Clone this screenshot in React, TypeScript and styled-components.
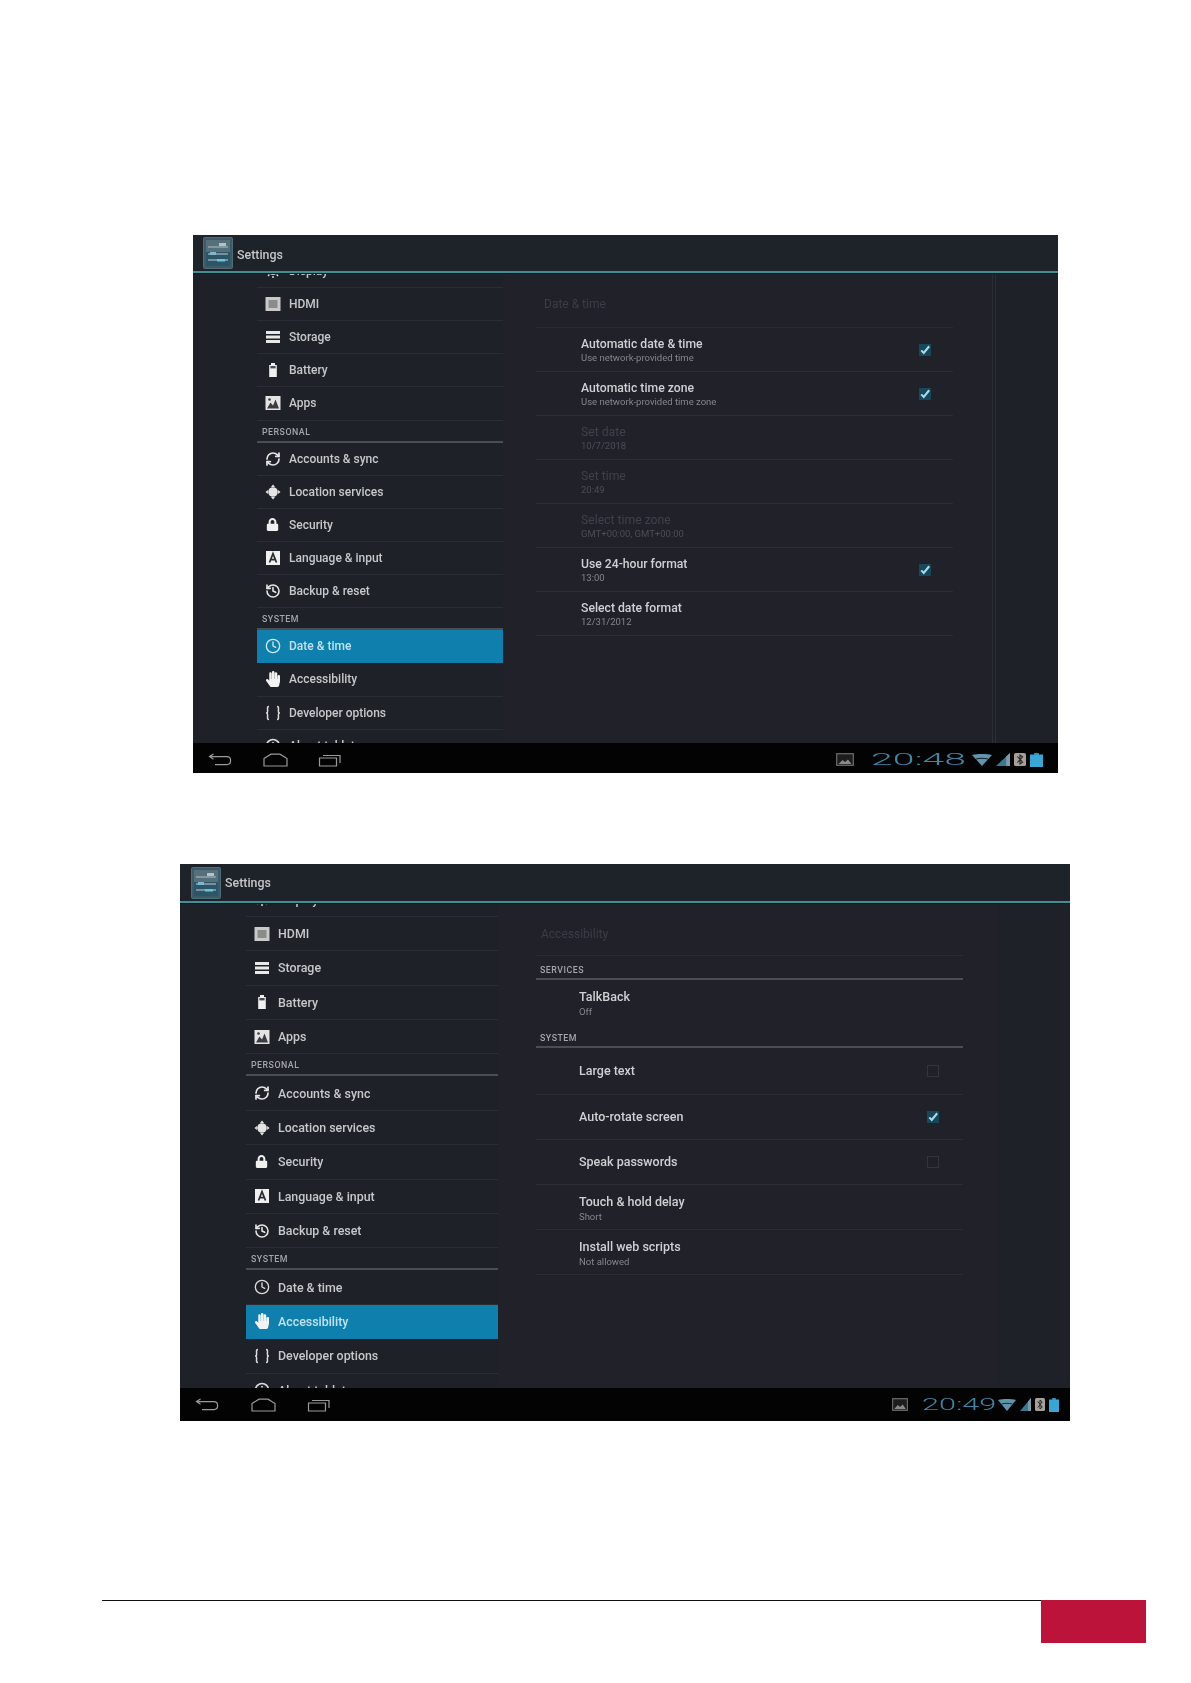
import React from "react";
import styled, { createGlobalStyle } from "styled-components";
import { Clock, History, RefreshCw } from "lucide-react";
import { FaHandPaper, FaLock } from "react-icons/fa";

const Global = createGlobalStyle`
  html, body { margin: 0; padding: 0; background: #fff; }
  body { font-family: Roboto, "Liberation Sans", sans-serif; }
`;

const Page = styled.div`
  width: 1191px;
  height: 1683px;
  overflow: hidden;
  display: flex;
  flex-direction: column;
`;

const Screen = styled.section<{ $left: number; $top: number; $w: number; $h: number }>`
  flex: none;
  margin-left: ${(p) => p.$left}px;
  margin-top: ${(p) => p.$top}px;
  width: ${(p) => p.$w}px;
  height: ${(p) => p.$h}px;
  background: #1e2128;
  display: flex;
  flex-direction: column;
  overflow: hidden;
  filter: blur(0.6px);
`;

const ActionBar = styled.header<{ $h: number; $pad: number }>`
  flex: none;
  height: ${(p) => p.$h}px;
  padding-left: ${(p) => p.$pad}px;
  box-sizing: border-box;
  display: flex;
  align-items: center;
  gap: 4px;
  background: #1e2229;
  border-bottom: 2px solid #3a9298;
  box-shadow: 0 1px 0 #11151a;
  position: relative;
  z-index: 2;
`;

const BarTitle = styled.span<{ $dy: number }>`
  margin-top: ${(p) => p.$dy}px;
  font-size: 12.4px;
  font-weight: 500;
  color: #c4c6c8;
`;

const Body = styled.div`
  flex: 1;
  min-height: 0;
  display: flex;
  overflow: hidden;
`;

const Sidebar = styled.nav<{ $gutter: number; $w: number }>`
  flex: none;
  margin-left: ${(p) => p.$gutter}px;
  width: ${(p) => p.$w}px;
  overflow: hidden;
`;

const MenuList = styled.div<{ $scroll: number }>`
  margin-top: ${(p) => p.$scroll}px;
`;

const MenuRow = styled.div<{ $h: number; $fs: number; $active?: boolean }>`
  height: ${(p) => p.$h}px;
  box-sizing: border-box;
  display: flex;
  align-items: center;
  gap: 8px;
  padding-left: 7px;
  font-size: ${(p) => p.$fs}px;
  font-weight: 500;
  color: ${(p) => (p.$active ? "#bfe3f0" : "#c6c8ca")};
  background: ${(p) => (p.$active ? "#0f7fae" : "transparent")};
  border-bottom: 1px solid ${(p) => (p.$active ? "#0f7fae" : "#2a2d34")};
`;

const MenuIcon = styled.span<{ $active?: boolean }>`
  flex: none;
  width: 17px;
  height: 17px;
  display: flex;
  align-items: center;
  justify-content: center;
  color: ${(p) => (p.$active ? "#cfeaf5" : "#dcdcdc")};
`;

const SectionHead = styled.div<{ $h: number; $inset?: number; $pb?: number }>`
  height: ${(p) => p.$h}px;
  box-sizing: border-box;
  display: flex;
  align-items: flex-end;
  padding: 0 0 ${(p) => p.$pb ?? 4}px ${(p) => p.$inset ?? 5}px;
  font-size: 8.8px;
  font-weight: 500;
  letter-spacing: 0.5px;
  color: #a4a6a9;
  border-bottom: 2px solid #4a4d52;
`;

const Pane = styled.main<{ $w: number; $pl: number; $pr: number; $line?: boolean }>`
  flex: none;
  width: ${(p) => p.$w}px;
  box-sizing: border-box;
  padding: 0 ${(p) => p.$pr}px 0 ${(p) => p.$pl}px;
  background: #21212a;
  box-shadow: ${(p) => (p.$line ? "1px 0 0 #2b2e35, 3px 0 0 #1e2128, 4px 0 0 #2b2e35" : "none")};
`;

const PaneTitle = styled.h2<{ $inset: number; $h: number }>`
  margin: 0;
  height: ${(p) => p.$h}px;
  box-sizing: border-box;
  padding: 24px 0 0 ${(p) => p.$inset}px;
  font-size: 12px;
  line-height: 15px;
  font-weight: 400;
  color: #3c3c46;
  border-bottom: 1px solid #2a2a33;
`;

const Pref = styled.div<{ $h: number; $plain?: boolean; $pl: number; $pr: number }>`
  height: ${(p) => p.$h}px;
  box-sizing: border-box;
  display: flex;
  align-items: center;
  justify-content: space-between;
  padding: 0 ${(p) => p.$pr}px 0 ${(p) => p.$pl}px;
  border-bottom: ${(p) => (p.$plain ? "none" : "1px solid #2c2c35")};
`;

const PrefText = styled.div<{ $hasSub: boolean }>`
  display: flex;
  flex-direction: column;
  padding-top: ${(p) => (p.$hasSub ? 2 : 0)}px;
`;

const PrefTitle = styled.span<{ $off?: boolean; $fs: number; $lh: number }>`
  font-size: ${(p) => p.$fs}px;
  line-height: ${(p) => p.$lh}px;
  font-weight: ${(p) => (p.$off ? 400 : 500)};
  color: ${(p) => (p.$off ? "#40404a" : "#cfd0d3")};
`;

const PrefSub = styled.span<{ $off?: boolean }>`
  font-size: 9.5px;
  line-height: 13px;
  color: ${(p) => (p.$off ? "#4c4c55" : "#85868c")};
`;

const Check = styled.span<{ $on?: boolean }>`
  flex: none;
  width: 12px;
  height: 12px;
  box-sizing: border-box;
  display: flex;
  align-items: center;
  justify-content: center;
  background: ${(p) => (p.$on ? "#17485a" : "transparent")};
  border: 1px solid ${(p) => (p.$on ? "#17485a" : "#34343d")};
`;

const NavBar = styled.footer<{ $h: number; $pad: number; $gap: number; $right: number; $dy: number }>`
  flex: none;
  height: ${(p) => p.$h}px;
  box-sizing: border-box;
  background: #030303;
  display: flex;
  align-items: center;
  gap: ${(p) => p.$gap}px;
  padding: ${(p) => p.$dy}px ${(p) => p.$right}px 0 ${(p) => p.$pad}px;
  position: relative;
  z-index: 2;
`;

const StatusArea = styled.div`
  margin-left: auto;
  display: flex;
  align-items: center;
  gap: 4px;
`;

const ClockBox = styled.span<{ $w: number; $ml: number; $mr: number }>`
  width: ${(p) => p.$w}px;
  margin: 0 ${(p) => p.$mr}px 0 ${(p) => p.$ml}px;
  display: block;
  white-space: nowrap;
`;

const ClockText = styled.span<{ $sx: number }>`
  display: inline-block;
  font-size: 17px;
  line-height: 17px;
  font-weight: 300;
  color: #3f86a8;
  transform: scaleX(${(p) => p.$sx});
  transform-origin: left center;
`;

const Footer = styled.div`
  flex: none;
  margin-top: 179px;
  margin-left: 102px;
  width: 1044px;
  display: flex;
`;

const FooterRule = styled.div`
  flex: 1;
  height: 1px;
  background: #111;
`;

const RedTab = styled.div`
  flex: none;
  width: 105px;
  height: 43px;
  background: #bb1339;
`;

const AppIcon = () => (
  <svg width="30" height="32" viewBox="0 0 30 32">
    <rect x="0.5" y="0.5" width="29" height="31" rx="1" fill="#3d5a68" stroke="#4c6d78" />
    <rect x="3" y="3" width="24" height="12" fill="#55707a" />
    <rect x="3" y="15" width="24" height="14" fill="#2d5568" />
    <path d="M5 10h20M5 17h20M5 23h20" stroke="#8fa6ad" strokeWidth="1.4" />
    <rect x="16" y="6" width="7" height="3" fill="#b4c4c6" />
    <rect x="7" y="15" width="6" height="3" fill="#7fb8cc" />
    <rect x="14" y="22" width="8" height="2.5" fill="#69c3dd" />
  </svg>
);

const S = 16;
const icons: Record<string, React.ReactNode> = {
  display: (
    <svg width={S} height={S} viewBox="0 0 16 16" fill="#ddd">
      <circle cx="8" cy="8" r="4" />
      <path d="M1 8h2M13 8h2M8 1v2M8 13v2M3 3l1.4 1.4M11.6 11.6L13 13M13 3l-1.4 1.4M4.4 11.6L3 13" stroke="#ddd" strokeWidth="1.4" />
    </svg>
  ),
  hdmi: (
    <svg width={S} height={S} viewBox="0 0 16 16">
      <rect x="0.5" y="1" width="15" height="14" fill="#c9c9c9" />
      <rect x="3.5" y="4" width="9" height="8" fill="#8b8b8b" />
    </svg>
  ),
  storage: (
    <svg width={S} height={S} viewBox="0 0 16 16" fill="#e8e8e8">
      <rect x="1" y="2" width="14" height="3" />
      <rect x="1" y="6.5" width="14" height="3" />
      <rect x="1" y="11" width="14" height="3" />
    </svg>
  ),
  battery: (
    <svg width={S} height={S} viewBox="0 0 16 16" fill="#f0f0f0">
      <path d="M6 1h4v2h1.8v12H4.2V3H6z" />
      <rect x="5.4" y="4" width="5.2" height="2.4" fill="#4a4c52" />
    </svg>
  ),
  apps: (
    <svg width={S} height={S} viewBox="0 0 16 16">
      <rect x="0.5" y="1" width="15" height="14" fill="#e4e4e4" />
      <path d="M2 13.5l3.5-6 2.5 3 2.5-6 3.5 9z" fill="#3a3c42" />
      <circle cx="4.5" cy="4.5" r="1.3" fill="#3a3c42" />
    </svg>
  ),
  sync: <RefreshCw size={S} strokeWidth={2.6} color="#e4e4e4" />,
  location: (
    <svg width={S} height={S} viewBox="0 0 16 16" fill="#e4e4e4">
      <circle cx="8" cy="8" r="4.8" />
      <path d="M8 .5l2 2.4H6zM8 15.5l2-2.4H6zM.5 8l2.4-2v4zM15.5 8l-2.4-2v4z" />
    </svg>
  ),
  security: <FaLock size={13} color="#f0f0f0" />,
  language: (
    <svg width={S} height={S} viewBox="0 0 16 16">
      <rect x="1" y="1" width="14" height="14" fill="#f0f0f0" />
      <path d="M4.5 12.5L8 3.6l3.5 8.9M5.8 9.6h4.4" fill="none" stroke="#2a2c32" strokeWidth="1.7" />
    </svg>
  ),
  backup: <History size={S} strokeWidth={2.4} color="#e4e4e4" />,
  clock: <Clock size={S} strokeWidth={2} />,
  hand: <FaHandPaper size={S} color="#f2f2f2" />,
  braces: (
    <svg width={S} height={S} viewBox="0 0 16 16" fill="none" stroke="#ddd" strokeWidth="1.5">
      <path d="M4 1.5C2 1.5 2.6 3 2.6 5.5S2.4 8 1 8c1.4 0 1.6.2 1.6 2.5S2 14.5 4 14.5" />
      <path d="M12 1.5c2 0 1.4 1.5 1.4 4s.2 2.5 1.6 2.5c-1.4 0-1.6.2-1.6 2.5s.6 4-1.4 4" />
    </svg>
  ),
  about: (
    <svg width={S} height={S} viewBox="0 0 16 16" fill="none" stroke="#ddd" strokeWidth="1.6">
      <circle cx="8" cy="8" r="6.5" />
      <path d="M8 7v5M8 4v1.6" />
    </svg>
  ),
};

const Tick = () => (
  <svg width="12" height="12" viewBox="0 0 12 12" fill="none" stroke="#a8dcea" strokeWidth="2.4">
    <path d="M1.5 6.5l3 3L11 1.5" />
  </svg>
);

const BackIcon = () => (
  <svg width="25" height="14" viewBox="0 0 25 14" fill="none" stroke="#9a9a9a" strokeWidth="1.2">
    <path d="M5.5 1L1.5 3.6l4 2.6M1.5 3.6H19c2.4 0 3.6 1.8 3.6 4s-1.2 4-3.6 4H7" />
  </svg>
);
const HomeIcon = () => (
  <svg width="25" height="14" viewBox="0 0 25 14" fill="none" stroke="#9a9a9a" strokeWidth="1.2">
    <path d="M1 5.6L8 1.2h9l7 4.4V13H1z" />
  </svg>
);
const RecentIcon = () => (
  <svg width="25" height="14" viewBox="0 0 25 14" fill="none" stroke="#9a9a9a" strokeWidth="1.2">
    <path d="M1.5 5h17v8h-17zM5 2.5h17V10" />
  </svg>
);

const StatusImage = ({ w }: { w: number }) => (
  <svg width={w} height="13" viewBox="0 0 18 13" preserveAspectRatio="none">
    <rect x="0.7" y="0.7" width="16.6" height="11.6" fill="#1d1d1d" stroke="#6d6d6d" strokeWidth="1.2" />
    <path d="M2.5 11l4-4 2.5 2 3-2.5 3.5 4.5z" fill="#8a8a8a" />
  </svg>
);
const Wifi = ({ w }: { w: number }) => (
  <svg width={w} height="12" viewBox="0 0 20 12" preserveAspectRatio="none">
    <path d="M0 1c6-1.3 14-1.3 20 0L10 12z" fill="#5e96ae" />
    <path d="M4 5c4-.9 8-.9 12 0" stroke="#162027" strokeWidth="1" fill="none" />
  </svg>
);
const Signal = ({ w }: { w: number }) => (
  <svg width={w} height="13" viewBox="0 0 13 13" preserveAspectRatio="none">
    <path d="M0 13L13 0v13z" fill="#3d7893" />
    <path d="M9.5 3.5L13 0v13H9.5z" fill="#7d9cab" />
  </svg>
);
const Bluetooth = ({ w }: { w: number }) => (
  <svg width={w} height="13" viewBox="0 0 10 13" preserveAspectRatio="none">
    <rect width="10" height="13" rx="1.5" fill="#a5a09a" />
    <path d="M2.8 3.5l4.4 5.6L5 11V2l2.2 1.9L2.8 9.5" fill="none" stroke="#2a2826" strokeWidth="1" />
  </svg>
);
const BatteryStatus = ({ w }: { w: number }) => (
  <svg width={w} height="14" viewBox="0 0 11 14" preserveAspectRatio="none">
    <rect x="3.5" width="4" height="2" fill="#2f8fb8" />
    <rect y="1.5" width="11" height="12.5" fill="#38a7d6" />
  </svg>
);

type MenuItem = { kind: "row" | "head"; icon?: string; label: string };

const menu: MenuItem[] = [
  { kind: "row", icon: "display", label: "Display" },
  { kind: "row", icon: "hdmi", label: "HDMI" },
  { kind: "row", icon: "storage", label: "Storage" },
  { kind: "row", icon: "battery", label: "Battery" },
  { kind: "row", icon: "apps", label: "Apps" },
  { kind: "head", label: "PERSONAL" },
  { kind: "row", icon: "sync", label: "Accounts & sync" },
  { kind: "row", icon: "location", label: "Location services" },
  { kind: "row", icon: "security", label: "Security" },
  { kind: "row", icon: "language", label: "Language & input" },
  { kind: "row", icon: "backup", label: "Backup & reset" },
  { kind: "head", label: "SYSTEM" },
  { kind: "row", icon: "clock", label: "Date & time" },
  { kind: "row", icon: "hand", label: "Accessibility" },
  { kind: "row", icon: "braces", label: "Developer options" },
  { kind: "row", icon: "about", label: "About tablet" },
];

const Menu = ({ active, rowH, headH, scroll, fs }: { active: string; rowH: number; headH: number; scroll: number; fs: number }) => (
  <MenuList $scroll={scroll}>
    {menu.map((m) =>
      m.kind === "head" ? (
        <SectionHead key={m.label} $h={headH}>{m.label}</SectionHead>
      ) : (
        <MenuRow key={m.label} $h={rowH} $fs={fs} $active={m.label === active}>
          <MenuIcon $active={m.label === active}>{icons[m.icon!]}</MenuIcon>
          {m.label}
        </MenuRow>
      )
    )}
  </MenuList>
);

type PrefProps = { h: number; pl: number; pr: number; fs: number; lh: number; title: string; sub?: string; off?: boolean; check?: "on" | "off"; plain?: boolean };

const PrefRow = ({ h, pl, pr, fs, lh, title, sub, off, check, plain }: PrefProps) => (
  <Pref $h={h} $pl={pl} $pr={pr} $plain={plain}>
    <PrefText $hasSub={!!sub}>
      <PrefTitle $off={off} $fs={fs} $lh={lh}>{title}</PrefTitle>
      {sub && <PrefSub $off={off}>{sub}</PrefSub>}
    </PrefText>
    {check && <Check $on={check === "on"}>{check === "on" && <Tick />}</Check>}
  </Pref>
);

type NavProps = { h: number; pad: number; gap: number; right: number; dy: number; time: string; clockW: number; sx: number; ml: number; mr: number; imgW: number; wifiW: number; sigW: number; btW: number; batW: number };

const Nav = ({ h, pad, gap, right, dy, time, clockW, sx, ml, mr, imgW, wifiW, sigW, btW, batW }: NavProps) => (
  <NavBar $h={h} $pad={pad} $gap={gap} $right={right} $dy={dy}>
    <BackIcon />
    <HomeIcon />
    <RecentIcon />
    <StatusArea>
      <StatusImage w={imgW} />
      <ClockBox $w={clockW} $ml={ml} $mr={mr}>
        <ClockText $sx={sx}>{time}</ClockText>
      </ClockBox>
      <Wifi w={wifiW} />
      <Signal w={sigW} />
      <Bluetooth w={btW} />
      <BatteryStatus w={batW} />
    </StatusArea>
  </NavBar>
);

const top = { pl: 45, pr: 22, fs: 12.2, h: 44, lh: 14 };
const bottom = { pl: 43, pr: 24, fs: 12.5, h: 45, lh: 16 };

export default function App() {
  return (
    <Page>
      <Global />
      <Screen $left={193} $top={235} $w={865} $h={538}>
        <ActionBar $h={38} $pad={10}>
          <AppIcon />
          <BarTitle $dy={3}>Settings</BarTitle>
        </ActionBar>
        <Body>
          <Sidebar $gutter={64} $w={246}>
            <Menu active="Date & time" rowH={33.15} headH={22} scroll={-18.2} fs={12} />
          </Sidebar>
          <Pane $w={489} $pl={33} $pr={39} $line>
            <PaneTitle $inset={8} $h={55}>Date &amp; time</PaneTitle>
            <PrefRow {...top} title="Automatic date & time" sub="Use network-provided time" check="on" />
            <PrefRow {...top} title="Automatic time zone" sub="Use network-provided time zone" check="on" />
            <PrefRow {...top} title="Set date" sub="10/7/2018" off />
            <PrefRow {...top} title="Set time" sub="20:49" off />
            <PrefRow {...top} title="Select time zone" sub="GMT+00:00, GMT+00:00" off />
            <PrefRow {...top} title="Use 24-hour format" sub="13:00" check="on" />
            <PrefRow {...top} title="Select date format" sub="12/31/2012" />
          </Pane>
        </Body>
        <Nav h={30} pad={15} gap={30} right={15} dy={3} time="20:48" clockW={92} sx={2.3} ml={13} mr={5} imgW={18} wifiW={20} sigW={14} btW={12} batW={13} />
      </Screen>

      <Screen $left={180} $top={91} $w={890} $h={557}>
        <ActionBar $h={39} $pad={11}>
          <AppIcon />
          <BarTitle $dy={0}>Settings</BarTitle>
        </ActionBar>
        <Body>
          <Sidebar $gutter={66} $w={252}>
            <Menu active="Accessibility" rowH={34.4} headH={22} scroll={-20.5} fs={12.4} />
          </Sidebar>
          <Pane $w={500} $pl={38} $pr={35}>
            <PaneTitle $inset={5} $h={53}>Accessibility</PaneTitle>
            <SectionHead $h={24} $inset={4} $pb={3}>SERVICES</SectionHead>
            <PrefRow {...bottom} title="TalkBack" sub="Off" plain />
            <SectionHead $h={23} $inset={4} $pb={3}>SYSTEM</SectionHead>
            <PrefRow {...bottom} h={47} title="Large text" check="off" />
            <PrefRow {...bottom} title="Auto-rotate screen" check="on" />
            <PrefRow {...bottom} title="Speak passwords" check="off" />
            <PrefRow {...bottom} title="Touch & hold delay" sub="Short" />
            <PrefRow {...bottom} title="Install web scripts" sub="Not allowed" />
          </Pane>
        </Body>
        <Nav h={33} pad={15} gap={31} right={11} dy={0} time="20:49" clockW={71} sx={1.8} ml={10} mr={1} imgW={16} wifiW={18} sigW={11} btW={10} batW={10} />
      </Screen>

      <Footer>
        <FooterRule />
        <RedTab />
      </Footer>
    </Page>
  );
}
